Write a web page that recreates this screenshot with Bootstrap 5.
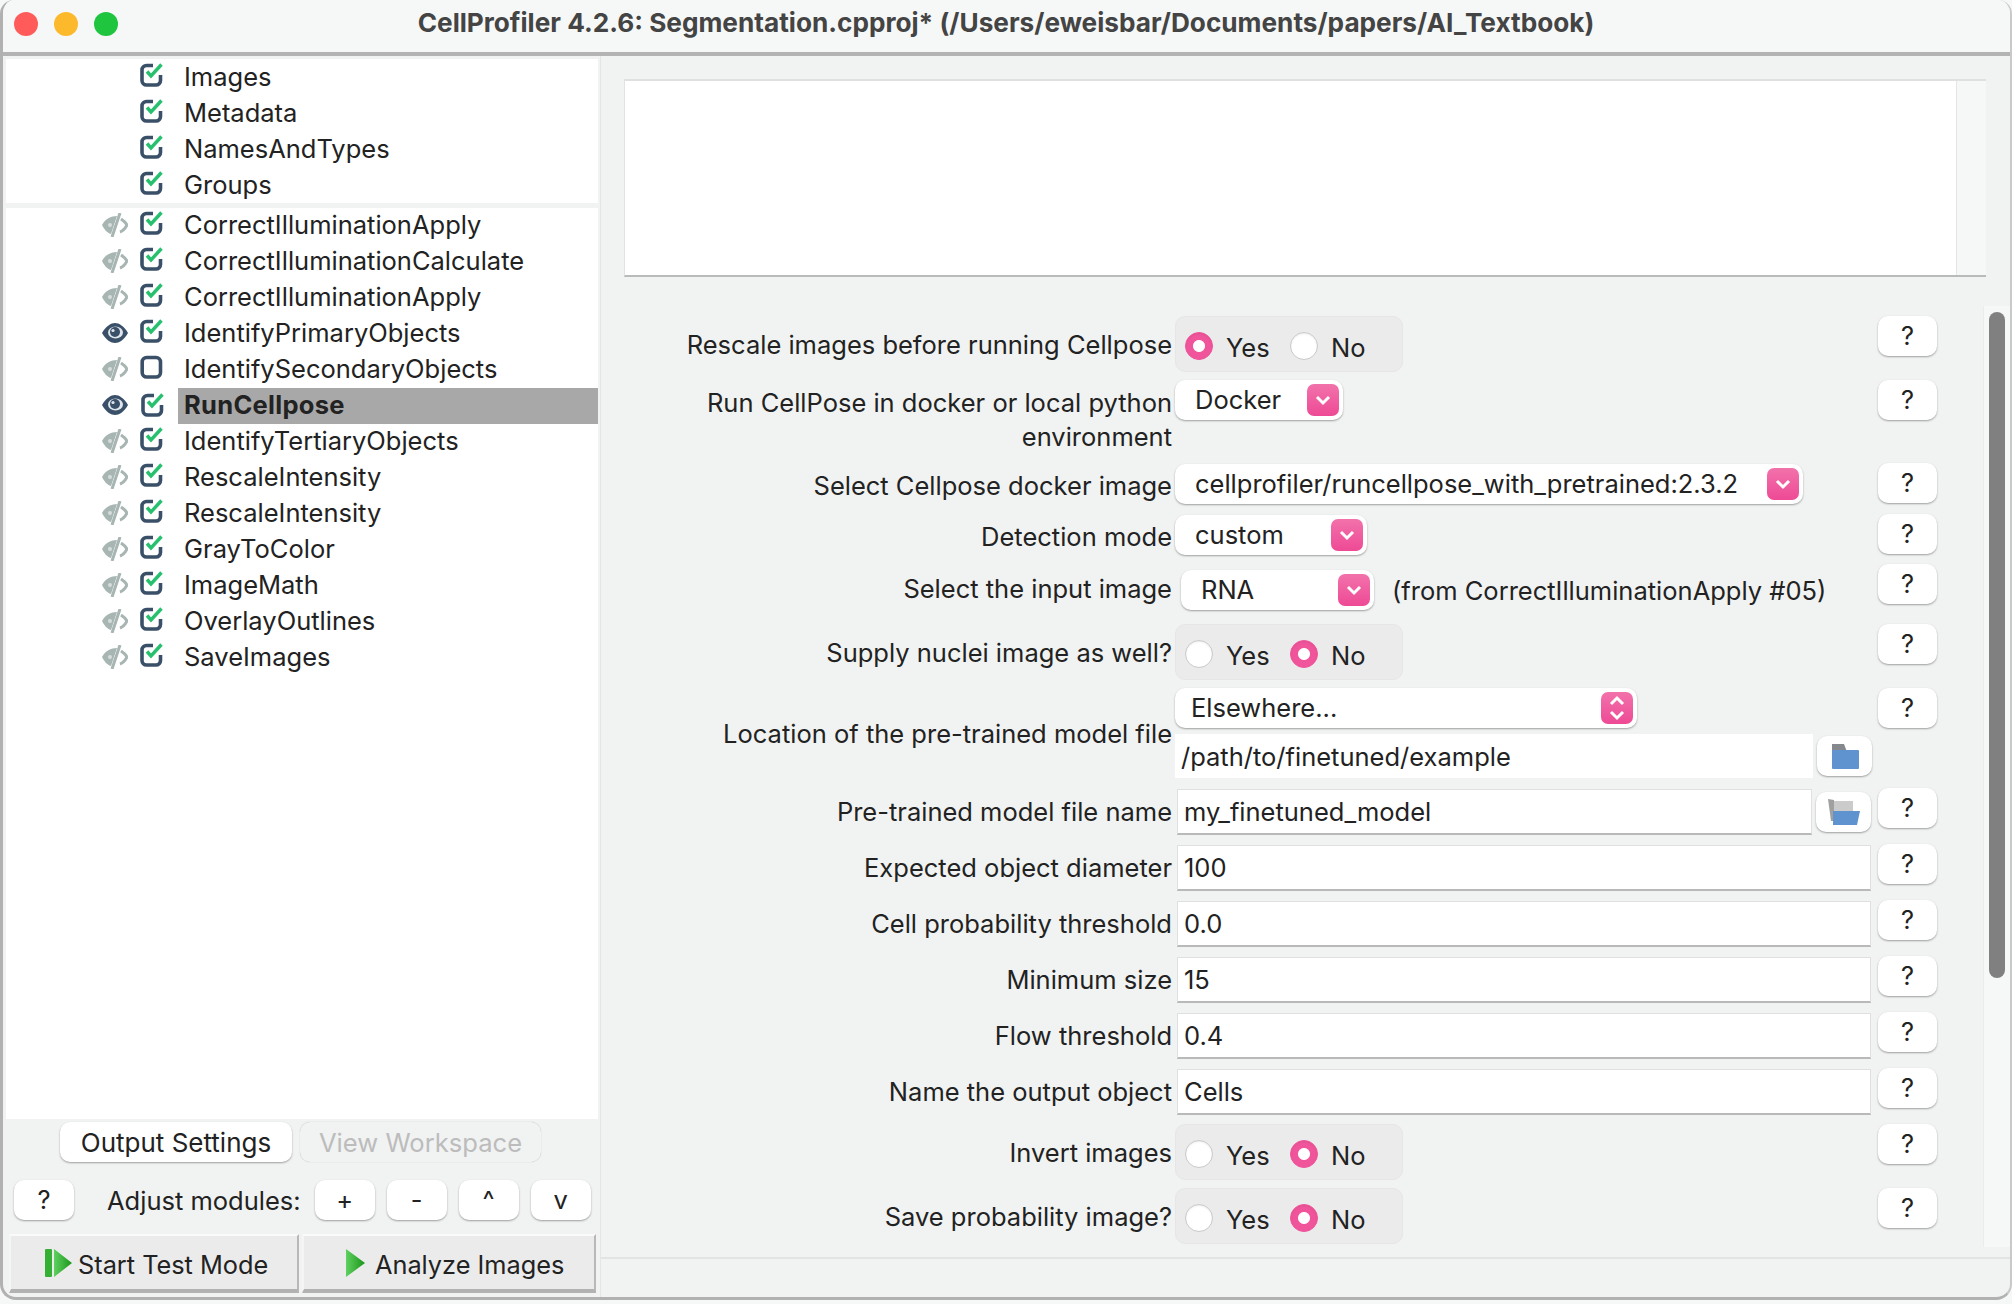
<!DOCTYPE html>
<html lang="en">
<head>
  <meta charset="UTF-8" />
  <title>CellProfiler 4.2.6</title>
  <link href="https://cdn.jsdelivr.net/npm/bootstrap@5.3.5/dist/css/bootstrap.min.css" rel="stylesheet" />
  <style>
    html, body { height: 100%; }
    body { background: #f6f7f7; color: #222; font-family: Inter, "Liberation Sans", sans-serif; font-size: 25.5px; overflow: hidden; }
    .app-win { width: 2012px; height: 1300px; background: #f1f3f2; border-radius: 14px 14px 16px 16px; border-left: 3px solid #b0b1b0; border-right: 2px solid #c8c9c8; border-bottom: 3px solid #b0b1b0; overflow: hidden; }
    .title-bar { height: 56px; margin-left: -3px; margin-right: -2px; padding-bottom: 6px; background: #f6f8f7; border-bottom: 4px solid #b2b3b2; position: relative; font-size: 26.2px; font-weight: 700; color: #444; }
    .light { width: 24px; height: 24px; border-radius: 50%; }
    .lights { position: absolute; left: 14px; top: 12px; gap: 16px; }
    .left-pane { width: 597px; flex: none; padding: 4px 2px 0 3px; }
    .mod-list { background: #fff; height: 1060px; line-height: 36px; }
    .mod-group { height: 144px; margin-top: -1px; }
    .mod-sep { height: 5px; background: #f1f3f2; }
    .mod-row { height: 36px; }
    .eye-slot { width: 26px; margin-left: 96px; margin-top: -3px; height: 24px; flex: none; }
    .chk-slot { width: 24px; height: 24px; margin-left: 12px; margin-top: -4px; flex: none; }
    .mod-name { margin-left: 14px; padding-left: 6px; flex: 1; }
    .mod-live .mod-name { line-height: 34px; padding-bottom: 2px; }
    .mod-live .chk-slot { margin-top: -6px; }
    .mod-on .mod-name { background: #a8a8a8; font-weight: 700; letter-spacing: .3px; }
    .mod-on .chk-slot { margin-left: 13px; margin-right: -1px; margin-top: -3px; }
    .mac-btn { background: #fff; border: 0; border-radius: 10px; box-shadow: 0 1px 2px rgba(0,0,0,.35); height: 40px; padding: 0; font-size: 25.5px; line-height: 40px; color: #222; }
    .mac-btn.disabled, .mac-btn:disabled { background: #f1f2f2; color: #bcbcbc; opacity: 1; box-shadow: 0 0 1px rgba(0,0,0,.3); border: 0; }
    .tab-btns { margin: 3px 0 0 54px; gap: 8px; }
    .tab-btns .mac-btn { font-size: 26px; padding-top: 1px; }
    .tab-btns .mac-btn:disabled { font-size: 25.6px; }
    .w-out { width: 232px; }
    .w-view { width: 241px; }
    .adjust { margin: 17px 0 0 8px; }
    .w-q { width: 60px; flex: none; }
    .adj-label { margin: 3px 14px 0 33px; }
    .adj-btns { gap: 12px; }
    .run-btns { margin: 14px 0 0 3px; gap: 3px; }
    .run-btn { background: #ebebeb; border: 0; border-radius: 0; border-top: 2px solid #fafafa; border-right: 2px solid #b8b8b8; border-left: 2px solid #f5f5f5; border-bottom: 4px solid #b2b2b2; height: 59px; padding: 0; font-size: 25.3px; color: #222; }
    .run-lbl { margin-top: 5px; }
    .w-test { width: 290px; padding-left: 34px; gap: 6px; }
    .w-an { width: 294px; padding-left: 42px; gap: 10px; }
    .right-pane { border-left: 1px solid #e4e6e5; min-width: 0; }
    .help-box { height: 198px; margin: 23px 24px 0 23px; background: #fff; border-top: 2px solid #dfe1e0; border-bottom: 2px solid #b9baba; border-left: 1px solid #e2e2e2; }
    .help-track { width: 30px; background: #f6f8f7; border-left: 1px solid #e4e6e5; }
    .set-area { height: 941px; margin-top: 29px; }
    .set-form { flex: 1; padding-top: 10px; min-width: 0; }
    .set-track { width: 27px; background: #f6f8f7; border-left: 1px solid #eaeceb; padding: 6px 0 0 5px; }
    .set-thumb { width: 16px; height: 666px; background: #808080; border-radius: 8px; }
    .foot-line { margin-top: 10px; border-top: 2px solid #e2e4e3; }
    .set-row { margin-bottom: 9px; }
    .set-label { width: 553px; flex: none; margin-left: 21px; text-align: right; align-self: center; line-height: 34px; padding-right: 3px; }
    .set-ctl { width: 696px; flex: none; gap: 4px; align-items: center; }
    .set-help { margin-left: 7px; width: 59px; }
    .h-47 { height: 47px; }
    .h-41 { height: 41px; margin-bottom: 10px; }
    .h-41b { height: 41px; margin-bottom: 9px; }
    .h-46 { height: 46px; margin-bottom: 14px; }
    .h-doc { height: 70px; margin-bottom: 13px; }
    .h-loc { height: 90px; margin-bottom: 10px; }
    .h-56b { height: 56px; margin-bottom: 8px; }
    .label-top { align-self: flex-start; margin-top: 6px; }
    .label-low { margin-top: 4px; }
    .label-radio { margin-top: 2px; }
    .radio-box { width: 228px; height: 56px; background: #ebebeb; border: 1px solid #e6e6e6; border-radius: 10px; padding-left: 9px; }
    .radio-box .form-check-input { width: 28px; height: 28px; margin: 4px 0 0; border: 1px solid #c9c9c9; box-shadow: inset 0 1px 2px rgba(0,0,0,.08); background-image: none; flex: none; }
    .radio-box .form-check-input:checked { background-color: #f0559b; border-color: #f0559b; background-image: radial-gradient(circle, #fff 0 5.5px, transparent 6.5px); }
    .radio-txt { margin: 8px 0 0 13px; width: 64px; flex: none; }
    .sel-btn { justify-content: space-between; padding: 0 4px 0 20px; line-height: 40px; }
    .pink-box { width: 32px; height: 32px; border-radius: 7px; background: linear-gradient(#f272ab, #ee4a95); flex: none; }
    .w-docker { width: 168px; }
    .w-image { width: 628px; }
    .w-mode { width: 192px; }
    .w-rna { width: 193px; margin-left: 6px; }
    .w-else { width: 462px; padding-left: 16px; }
    .from-txt { margin-left: 14px; }
    .txt-input { height: 46px; border-radius: 0; border: 1px solid #e0e0e0; border-bottom: 2px solid #b9b9b9; padding: 0 6px; font-size: 25.5px; color: #222; margin-left: 2px; }
    .txt-plain { border: 0; height: 44px; margin-left: 0; padding: 0 6px; width: 638px; }
    .loc-ctl { flex-direction: column; align-items: flex-start; gap: 6px; }
    .w-folder { width: 55px; flex: none; }
    .loc-path { gap: 4px; }
    .file-input { width: 635px; flex: none; }
    .wide-input { width: 694px; }
  </style>
</head>
<body>
  <div class="app-win d-flex flex-column">
    <div class="title-bar d-flex align-items-center justify-content-center">
      <div class="lights d-flex">
        <div class="light" style="background:#ff5b5b"></div>
        <div class="light" style="background:#fdb92c"></div>
        <div class="light" style="background:#1fc43f"></div>
      </div>
      <span>CellProfiler 4.2.6: Segmentation.cpproj* (/Users/eweisbar/Documents/papers/AI_Textbook)</span>
    </div>

    <div class="d-flex flex-grow-1">
      <div class="left-pane">
        <div class="mod-list" id="modList"></div>
        <div class="tab-btns d-flex">
          <button class="btn mac-btn w-out">Output Settings</button>
          <button class="btn mac-btn w-view" disabled>View Workspace</button>
        </div>
        <div class="adjust d-flex align-items-center">
          <button class="btn mac-btn w-q">?</button>
          <span class="adj-label">Adjust modules:</span>
          <div class="adj-btns d-flex">
            <button class="btn mac-btn w-q">+</button>
            <button class="btn mac-btn w-q">-</button>
            <button class="btn mac-btn w-q">^</button>
            <button class="btn mac-btn w-q">v</button>
          </div>
        </div>
        <div class="run-btns d-flex">
          <button class="btn run-btn w-test d-flex align-items-center">
            <svg width="27" height="28" viewBox="0 0 27 28">
              <defs><linearGradient id="gr" x1="0" x2="1" y1="0" y2="0"><stop offset="0" stop-color="#5fd05f"/><stop offset="1" stop-color="#1a961a"/></linearGradient></defs>
              <rect x="0" y="0" width="7" height="28" rx="1" fill="#35b035"/>
              <path d="M9 0 L27 14 L9 28 Z" fill="url(#gr)"/>
            </svg>
            <span class="run-lbl">Start Test Mode</span>
          </button>
          <button class="btn run-btn w-an d-flex align-items-center">
            <svg width="19" height="28" viewBox="0 0 19 28"><path d="M0 0 L19 14 L0 28 Z" fill="url(#gr)"/></svg>
            <span class="run-lbl">Analyze Images</span>
          </button>
        </div>
      </div>

      <div class="right-pane flex-grow-1">
        <div class="help-box d-flex justify-content-end"><div class="help-track"></div></div>
        <div class="set-area d-flex">
          <form class="set-form" id="setForm"></form>
          <div class="set-track"><div class="set-thumb"></div></div>
        </div>
        <div class="foot-line"></div>
      </div>
    </div>
  </div>

  <script>
    const CHECK = `<svg class="chk-slot" viewBox="0 0 24 24"><path d="M13 2.500H6.500a4.500 4.500 0 0 0-4.500 4.500V17.500a4.500 4.500 0 0 0 4.500 4.500H16a4.500 4.500 0 0 0 4.500-4.500V12" fill="none" stroke="#3a5068" stroke-width="3.600"/><path d="M7 8.500l4 4.500L21.500 1.500" fill="none" stroke="#27c06e" stroke-width="3.400"/></svg>`;
    const UNCHECK = `<svg class="chk-slot" viewBox="0 0 24 24"><rect x="2.200" y="2.500" width="18.300" height="19.500" rx="4.500" fill="none" stroke="#3a5068" stroke-width="3.600"/></svg>`;
    const EYE_ON = `<svg class="eye-slot" viewBox="0 0 26 24"><path d="M0 12C4 5 9 2 13 2s9 3 13 10c-4 7-9 10-13 10S4 19 0 12Z" fill="#3a5068"/><ellipse cx="13.500" cy="11.500" rx="7.500" ry="6" fill="#dfe5ea"/><circle cx="13" cy="11" r="5" fill="#3a5068"/><circle cx="11" cy="9.500" r="1.600" fill="#dfe5ea"/></svg>`;
    const EYE_OFF = `<svg class="eye-slot" viewBox="0 0 26 24"><path d="M0 12C3 6 9 3 15 3L9 21C5 20 2 16 0 12Z" fill="#a7b5b3"/><path d="M18 0L10 24" stroke="#a7b5b3" stroke-width="3"/><path d="M19 6c3 2 5 4 6 6-1.500 3-4 6-7 7" fill="none" stroke="#a7b5b3" stroke-width="3"/><circle cx="8" cy="12" r="2" fill="#d5dddb"/></svg>`;

    const fixedMods = ['Images', 'Metadata', 'NamesAndTypes', 'Groups'];
    const mods = [
      ['CorrectIlluminationApply', 0, 1], ['CorrectIlluminationCalculate', 0, 1], ['CorrectIlluminationApply', 0, 1],
      ['IdentifyPrimaryObjects', 1, 1], ['IdentifySecondaryObjects', 0, 0], ['RunCellpose', 1, 1, 1],
      ['IdentifyTertiaryObjects', 0, 1], ['RescaleIntensity', 0, 1], ['RescaleIntensity', 0, 1],
      ['GrayToColor', 0, 1], ['ImageMath', 0, 1], ['OverlayOutlines', 0, 1], ['SaveImages', 0, 1]
    ];
    const blankEye = '<span class="eye-slot"></span>';
    document.getElementById('modList').innerHTML =
      `<div class="mod-group">` + fixedMods.map(n => `<div class="mod-row d-flex align-items-center">${blankEye}${CHECK}<span class="mod-name">${n}</span></div>`).join('') + `</div>` +
      `<div class="mod-sep"></div>` +
      mods.map(m => `<div class="mod-row mod-live d-flex align-items-center ${m[3] ? 'mod-on' : ''}">${m[1] ? EYE_ON : EYE_OFF}${m[2] ? CHECK : UNCHECK}<span class="mod-name">${m[0]}</span></div>`).join('');

    const chevron = `<svg width="32" height="32" viewBox="0 0 32 32" class="pink-box"><path d="M10 13l6 6 6-6" fill="none" stroke="#fff" stroke-width="3"/></svg>`;
    const updown = `<svg width="32" height="32" viewBox="0 0 32 32" class="pink-box"><path d="M10 12l6-6 6 6M10 20l6 6 6-6" fill="none" stroke="#fff" stroke-width="3"/></svg>`;
    const folderClosed = `<svg width="28" height="25" viewBox="0 0 28 25"><path d="M1 0h12l3 8H1Z" fill="#85888c"/><rect x="1" y="6" width="27" height="19" rx="1" fill="#5f93cf"/></svg>`;
    const folderOpen = `<svg width="32" height="26" viewBox="0 0 32 26"><path d="M0 0l6 1v21H3Z" fill="#a0a0a0"/><rect x="6" y="2" width="19" height="12" fill="#cbcbcb"/><path d="M5 12h27l-3 14H5Z" fill="#5f93cf"/></svg>`;

    const radios = (yes) => `<div class="radio-box d-flex align-items-center">
        <input class="form-check-input" type="radio" ${yes ? 'checked' : ''} /><span class="radio-txt">Yes</span>
        <input class="form-check-input" type="radio" ${yes ? '' : 'checked'} /><span class="radio-txt">No</span></div>`;
    const sel = (txt, cls, icon = chevron) => `<button type="button" class="btn mac-btn sel-btn d-flex align-items-center ${cls}"><span>${txt}</span>${icon}</button>`;
    const input = (v, cls = 'wide-input') => `<input class="form-control txt-input ${cls}" type="text" value="${v}" />`;

    const rows = [
      ['Rescale images before running Cellpose', radios(true), 'h-56b', 'label-radio'],
      ['Run CellPose in docker or local python environment', sel('Docker', 'w-docker'), 'h-doc', 'label-top', 'align-items-start'],
      ['Select Cellpose docker image', sel('cellprofiler/runcellpose_with_pretrained:2.3.2', 'w-image'), 'h-41', 'label-low'],
      ['Detection mode', sel('custom', 'w-mode'), 'h-41b', 'label-low'],
      ['Select the input image', sel('RNA', 'w-rna') + '<span class="from-txt">(from CorrectIlluminationApply #05)</span>', 'h-46', 'label-low', 'align-items-end'],
      ['Supply nuclei image as well?', radios(false), 'h-56b', 'label-radio'],
    ];
    const rows2 = [
      ['Expected object diameter', '100'], ['Cell probability threshold', '0.0'], ['Minimum size', '15'],
      ['Flow threshold', '0.4'], ['Name the output object', 'Cells']
    ];
    const line = (label, ctl, cls, lblCls = '', ctlCls = '') =>
      `<div class="set-row d-flex align-items-start ${cls}">
        <label class="set-label ${lblCls}">${label}</label>
        <div class="set-ctl d-flex ${ctlCls} h-100">${ctl}</div>
        <button type="button" class="btn mac-btn set-help">?</button>
      </div>`;

    let html = rows.map(r => line(r[0], r[1], r[2], r[3] || '', r[4] || '')).join('');
    html += line('Location of the pre-trained model file',
      sel('Elsewhere...', 'w-else', updown) +
      `<div class="d-flex loc-path align-items-center">${input('/path/to/finetuned/example', 'txt-plain')}<button type="button" class="btn mac-btn w-folder d-flex align-items-center justify-content-center">${folderClosed}</button></div>`,
      'h-loc', 'label-radio', 'loc-ctl');
    html += line('Pre-trained model file name',
      input('my_finetuned_model', 'file-input') + `<button type="button" class="btn mac-btn w-folder d-flex align-items-center justify-content-center">${folderOpen}</button>`, 'h-47');
    html += rows2.map(r => line(r[0], input(r[1]), 'h-47')).join('');
    html += line('Invert images', radios(false), 'h-56b', 'label-radio');
    html += line('Save probability image?', radios(false), 'h-56b', 'label-radio');
    document.getElementById('setForm').innerHTML = html;
  </script>
  <script src="https://cdn.jsdelivr.net/npm/bootstrap@5.3.5/dist/js/bootstrap.bundle.min.js"></script>
</body>
</html>
